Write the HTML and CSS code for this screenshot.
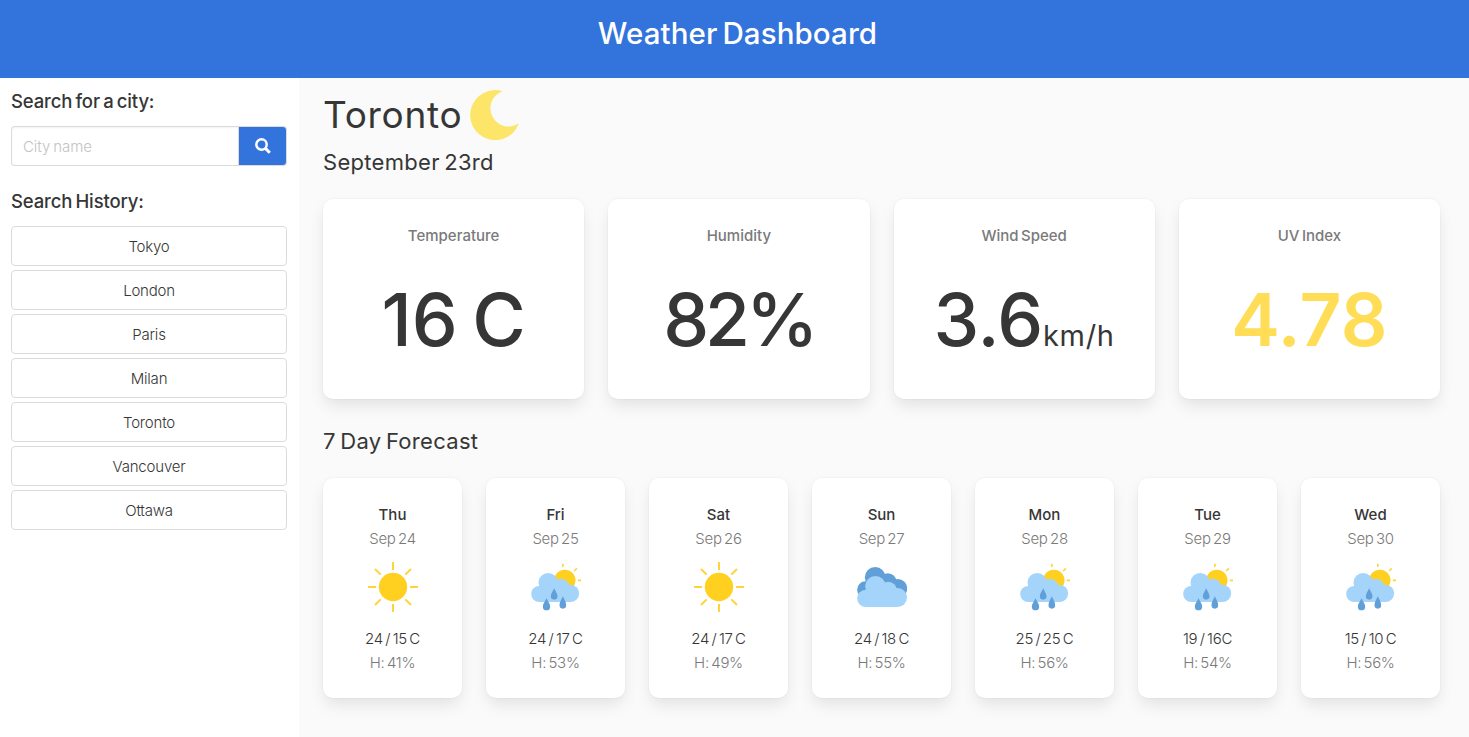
FILE: index.html
```html
<!DOCTYPE html>
<html lang="en">
<head>
<meta charset="utf-8">
<title>Weather Dashboard</title>
<link rel="stylesheet" href="styles.css">
</head>
<body>
<svg class="defs" width="0" height="0">
  <symbol id="sun" viewBox="24 21 150 150">
    <circle cx="99" cy="96" r="42.5" fill="#ffd01f"/>
    <path d="M99 21v24M99 147v24M24 96h24M150 96h24M45 42l17 17M136 133l17 17M153 42l-17 17M62 133l-17 17" stroke="#ffd43a" stroke-width="6" fill="none"/>
  </symbol>
  <symbol id="rain" viewBox="25.5 21 150 150">
    <path d="M121 26v10M163 40l-8 8M166 76h11" stroke="#ffd43a" stroke-width="5" fill="none"/>
    <circle cx="127" cy="76" r="32" fill="#ffd01f"/>
    <g fill="#a4d4fa"><circle cx="50" cy="117" r="24"/><circle cx="77" cy="83" r="29"/><circle cx="115" cy="97" r="26"/><circle cx="144" cy="115" r="26"/><path d="M50 90h93v51H50z"/></g>
    <path d="M95 100c5 11 10 16 10 24a10 10 0 0 1-20 0c0-8 5-13 10-24ZM72 130c5 11 11 16 11 25a11 11 0 0 1-22 0c0-9 6-14 11-25ZM121 124c5 11 10 17 10 27a10 10 0 0 1-20 0c0-10 5-16 10-27Z" fill="#609fd8"/>
  </symbol>
  <symbol id="cloud" viewBox="25.5 21 150 150">
    <g fill="#609fd8"><circle cx="51" cy="104" r="25"/><circle cx="80" cy="67" r="31"/><circle cx="118" cy="81" r="26"/><circle cx="148" cy="100" r="28"/><path d="M51 80h97v48H51z"/></g>
    <g fill="#a4d4fa"><circle cx="52" cy="130" r="26"/><circle cx="81" cy="94" r="31"/><circle cx="119" cy="106" r="26"/><circle cx="147" cy="127.5" r="28.5"/><path d="M52 104h95v52H52z"/></g>
  </symbol>
</svg>
<header class="header"><h1 class="brand">Weather Dashboard</h1></header>
<div class="layout">
  <aside class="sidebar">
    <h2 class="side-title">Search for a city:</h2>
    <div class="search">
      <input class="search-input" type="text" placeholder="City name">
      <button class="search-button" aria-label="Search"><svg width="16" height="16" viewBox="0 0 16 16" fill="none" stroke="#fff"><circle cx="6.5" cy="6.5" r="5.2" stroke-width="2.5"/><path d="M10.4 10.4l4.4 4.4" stroke-width="3"/></svg></button>
    </div>
    <h2 class="side-title history-title">Search History:</h2>
    <div class="history">
      <button class="city">Tokyo</button>
      <button class="city">London</button>
      <button class="city">Paris</button>
      <button class="city">Milan</button>
      <button class="city">Toronto</button>
      <button class="city">Vancouver</button>
      <button class="city">Ottawa</button>
    </div>
  </aside>
  <main class="main">
    <div class="current">
      <span class="place">Toronto</span>
      <svg width="50" height="50" viewBox="0 0 50 50"><path d="M32.5 1.2A25 25 0 1 0 48.8 33.3A18.15 18.15 0 1 1 32.5 1.2Z" fill="#fce568"/></svg>
    </div>
    <h2 class="section-title">September 23rd</h2>
    <section class="stats">
      <div class="card stat"><p class="label">Temperature</p><p class="value temp">16 C</p></div>
      <div class="card stat"><p class="label">Humidity</p><p class="value humidity">82%</p></div>
      <div class="card stat"><p class="label">Wind Speed</p><p class="value wind">3.6<span class="unit">km/h</span></p></div>
      <div class="card stat"><p class="label">UV Index</p><p class="value uv">4.78</p></div>
    </section>
    <h2 class="section-title forecast-title">7 Day Forecast</h2>
    <section class="forecast">
      <div class="card day"><p class="name">Thu</p><p class="muted">Sep 24</p><svg class="icon"><use href="#sun"/></svg><p class="range">24 / 15 C</p><p class="muted">H: 41%</p></div>
      <div class="card day"><p class="name">Fri</p><p class="muted">Sep 25</p><svg class="icon"><use href="#rain"/></svg><p class="range">24 / 17 C</p><p class="muted">H: 53%</p></div>
      <div class="card day"><p class="name">Sat</p><p class="muted">Sep 26</p><svg class="icon"><use href="#sun"/></svg><p class="range">24 / 17 C</p><p class="muted">H: 49%</p></div>
      <div class="card day"><p class="name">Sun</p><p class="muted">Sep 27</p><svg class="icon"><use href="#cloud"/></svg><p class="range">24 / 18 C</p><p class="muted">H: 55%</p></div>
      <div class="card day"><p class="name">Mon</p><p class="muted">Sep 28</p><svg class="icon"><use href="#rain"/></svg><p class="range">25 / 25 C</p><p class="muted">H: 56%</p></div>
      <div class="card day"><p class="name">Tue</p><p class="muted">Sep 29</p><svg class="icon"><use href="#rain"/></svg><p class="range">19 / 16C</p><p class="muted">H: 54%</p></div>
      <div class="card day"><p class="name">Wed</p><p class="muted">Sep 30</p><svg class="icon"><use href="#rain"/></svg><p class="range">15 / 10 C</p><p class="muted">H: 56%</p></div>
    </section>
  </main>
</div>
</body>
</html>
```
FILE: styles.css
```css
* { box-sizing: border-box; margin: 0; padding: 0; }
body { font-family: Inter, "Open Sans", sans-serif; font-size: 15px; line-height: 24px; font-weight: 260; color: #363636; background: #fff; overflow: hidden; }
.defs { display: block; }
.header { height: 78px; padding: 15px 0 0 6px; background: #3273dc; text-align: center; }
.brand { font-size: 29.5px; font-weight: 550; line-height: 36px; letter-spacing: 0.1px; word-spacing: -3px; color: #fff; }
.layout { display: flex; height: 659px; }
.sidebar { width: 299px; padding: 11px 12px 0 11px; }
.side-title { font-size: 18.5px; font-weight: 450; line-height: 24px; letter-spacing: -0.15px; word-spacing: -1.5px; }
.search { display: flex; height: 40px; margin-top: 13px; }
.search-input { flex: 1; min-width: 0; padding: 2px 11px 0; border: 1px solid #dbdbdb; border-right: 0; border-radius: 4px 0 0 4px; box-shadow: inset 0 1px 2px rgba(10,10,10,.05); font: inherit; letter-spacing: -0.1px; word-spacing: -1px; outline: 0; }
.search-input::placeholder { color: #c3c3c3; opacity: 1; }
.search-button { width: 49px; display: flex; align-items: center; justify-content: center; background: #3273dc; border: 1px solid #dbdbdb; border-radius: 0 4px 4px 0; }
.history-title { margin-top: 23px; }
.history { display: grid; gap: 4px; margin-top: 13px; }
.city { height: 40px; padding-top: 2px; border: 1px solid #dbdbdb; border-radius: 4px; background: #fff; font: inherit; letter-spacing: -0.2px; color: #363636; }
.main { flex: 1; background: #fafafa; padding: 12px 29px 0 24px; }
.current { display: flex; align-items: center; gap: 8px; height: 50px; }
.place { font-size: 37px; font-weight: 400; line-height: 50px; letter-spacing: 0.7px; }
.section-title { font-size: 22px; font-weight: 400; line-height: 28px; letter-spacing: 0.3px; word-spacing: -2px; margin-top: 8px; }
.stats { display: grid; grid-template-columns: repeat(4, 1fr); gap: 24px; margin-top: 23px; }
.card { background: #fff; border-radius: 10px; text-align: center; padding-top: 25px; box-shadow: 0 8px 16px -2px rgba(10,10,10,.1), 0 0 0 1px rgba(10,10,10,.02); }
.stat { height: 200px; }
.label { font-weight: 500; color: #7a7a7a; letter-spacing: 0; word-spacing: -1.5px; }
.value { font-size: 73px; font-weight: 530; line-height: 80px; margin-top: 32px; white-space: nowrap; }
.temp { word-spacing: -5px; }
.humidity { letter-spacing: -4px; }
.wind { letter-spacing: -0.3px; }
.unit { font-size: 29px; font-weight: 400; letter-spacing: 0.7px; }
.uv { color: #ffdd57; font-weight: 560; letter-spacing: 0.2px; }
.forecast-title { margin-top: 28px; }
.forecast { display: grid; grid-template-columns: repeat(7, 1fr); gap: 24px; margin-top: 23px; }
.day { height: 220px; letter-spacing: -0.3px; word-spacing: -1.5px; }
.name { font-weight: 500; letter-spacing: 0; }
.muted { color: #7a7a7a; }
.icon { display: block; width: 50px; height: 50px; margin: 11px auto 15px; }
```
